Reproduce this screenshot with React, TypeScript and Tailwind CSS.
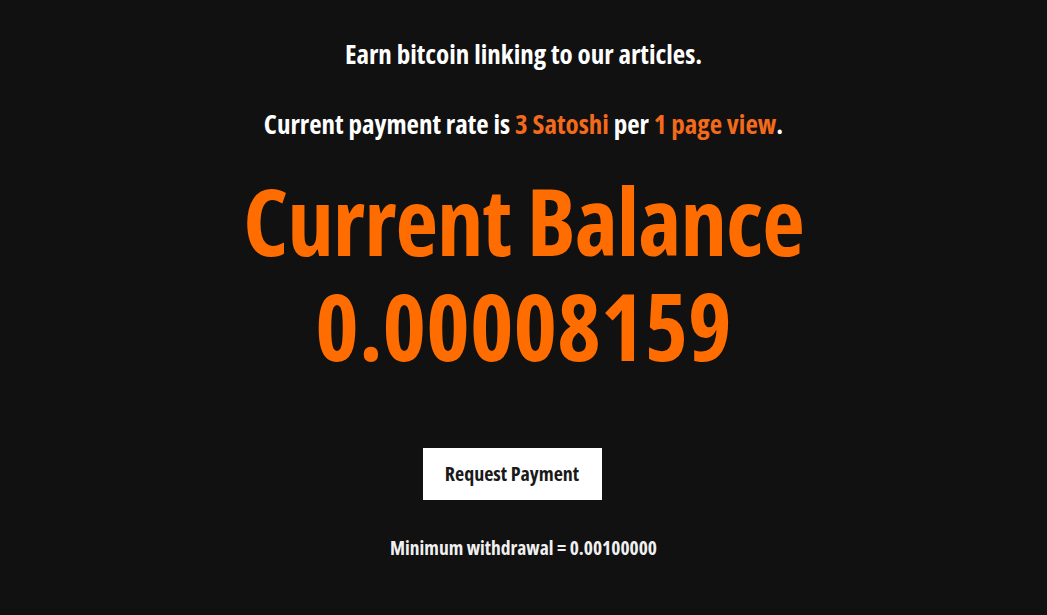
import React from "react";

export default function App() {
  return (
    <div className="min-h-[615px] w-full bg-[#111111] flex flex-col items-center text-white font-bold font-['Open_Sans',sans-serif] [font-stretch:condensed]">
      <p className="mt-[37px] text-[27px] leading-[34px]">Earn bitcoin linking to our articles.</p>
      <p className="mt-[36px] text-[27px] leading-[34px]">
        Current payment rate is <span className="text-[#f26a1b]">3 Satoshi</span> per <span className="text-[#f26a1b]">1 page view</span>.
      </p>
      <h1 className="mt-[27px] flex flex-col items-center text-[#ff6c00] text-[93px] leading-[105px] text-center">
        <span className="tracking-[-1px]">Current Balance</span>
        <span>0.00008159</span>
      </h1>
      <button className="mt-[70px] mr-[23px] bg-white text-[#1a1a1a] text-[20px] w-[179px] h-[52px] flex items-center justify-center whitespace-nowrap">
        Request Payment
      </button>
      <p className="mt-[35px] text-[19.5px] leading-[26px] text-[#f0f0f0]">Minimum withdrawal = 0.00100000</p>
    </div>
  );
}
